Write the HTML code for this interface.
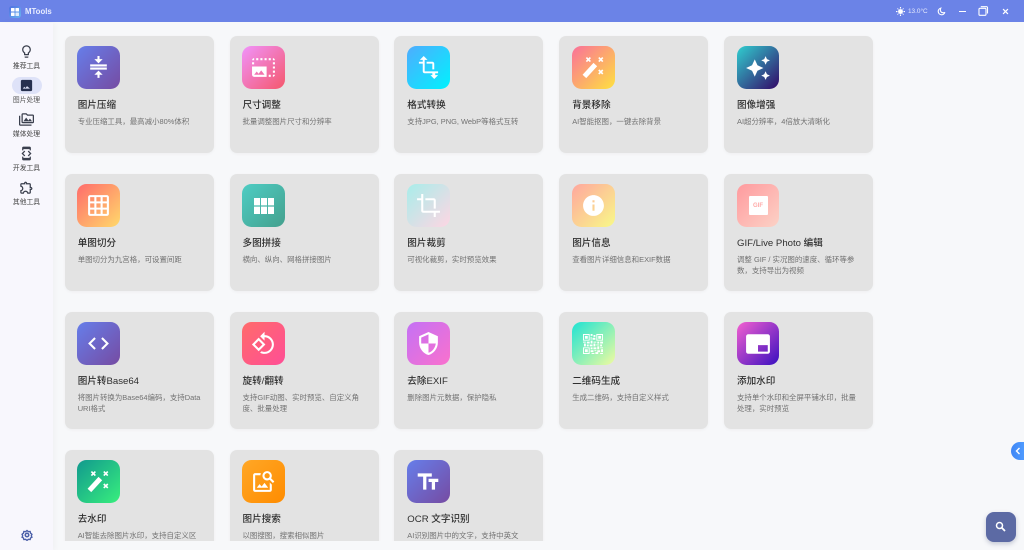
<!DOCTYPE html>
<html lang="zh-CN"><head><meta charset="utf-8"><title>MTools</title>
<style>
html,body{margin:0;padding:0;width:1024px;height:550px;overflow:hidden;background:#f7f8fa}
*{box-sizing:border-box}
body{font-family:"Liberation Sans","Noto Sans CJK SC",sans-serif;position:relative}
#root{position:absolute;inset:0;filter:blur(.3px)}
.top{position:absolute;left:0;top:0;width:1024px;height:22.3px;background:#6b83e7;color:#fff}
.side{position:absolute;left:0;top:22.5px;width:53px;height:528px;background:#f8f7fd;box-shadow:2px 0 6px rgba(0,0,0,.03)}
.pill{position:absolute;left:12px;top:54.5px;width:29.5px;height:17px;border-radius:9px;background:#dee2f8}
.sl{position:absolute;left:0;width:53px;text-align:center;font-size:6.8px;line-height:9px;color:#444;white-space:nowrap;margin-top:.5px}
.si{position:absolute;left:19px;width:15px;height:15px;fill:#3a3f4d}
.clip{position:absolute;left:60px;top:22.5px;width:964px;height:518.7px;overflow:hidden}
.c{position:absolute;width:149px;height:117px;background:#e3e3e3;border-radius:7px;box-shadow:0 1px 3px rgba(0,0,0,.04)}
.i{position:absolute;left:12.7px;top:10.6px;width:42.7px;height:42.7px;border-radius:9.5px;display:flex;align-items:center;justify-content:center}
.i svg{width:25px;height:25px;fill:#fff;display:block}
.t{position:absolute;left:13px;top:63px;font-size:9.6px;line-height:13px;color:#2f2f2f;white-space:nowrap;font-weight:500}
.d{position:absolute;left:13px;top:81.2px;font-size:7.45px;line-height:10.7px;color:#727272;white-space:nowrap}
</style></head><body><div id="root">
<div class="top">
 <div style="position:absolute;left:8.500px;top:5.500px;width:12px;height:12px;border-radius:3px;background:linear-gradient(135deg,#4f6fe0,#6ab4f0)"></div>
 <svg style="position:absolute;left:10.500px;top:7.500px" width="8" height="8" viewBox="0 0 9 9" fill="#fff"><rect width="4" height="4" rx=".5"/><rect x="5" width="4" height="4" rx=".5"/><rect y="5" width="4" height="4" rx=".5"/><rect x="5" y="5" width="4" height="4" rx=".5" opacity=".8"/></svg>
 <div style="position:absolute;left:25px;top:6px;font-size:7.800px;line-height:11px;font-weight:700;color:#e8ecff">MTools</div>
 <svg style="position:absolute;left:895.500px;top:6.500px" width="9" height="9" viewBox="0 0 24 24" fill="#fff"><circle cx="12" cy="12" r="6.500"/><path d="M10.500 0h3v4h-3zM10.500 20h3v4h-3zM0 10.500h4v3H0zM20 10.500h4v3h-4zM3 4.400L4.400 3l2.800 2.800-1.400 1.400zM16.800 18.200l1.400-1.400 2.800 2.800-1.400 1.400zM3 19.600l2.800-2.800 1.400 1.400L4.400 21zM16.800 5.800L19.600 3 21 4.400l-2.800 2.800z"/></svg>
 <div style="position:absolute;left:908px;top:6.500px;font-size:6.400px;line-height:10px;color:#e6eafc;white-space:nowrap">13.0°C</div>
 <svg style="position:absolute;left:937px;top:6.500px" width="9" height="9" viewBox="0 0 24 24" fill="none" stroke="#fff" stroke-width="3"><path d="M10 3a9 9 0 1 0 11 11c-1.500 2-9 2-11-2-1.500-3-1-7 0-9z"/></svg>
 <div style="position:absolute;left:959px;top:10.500px;width:7px;height:1.200px;background:#fff"></div>
 <svg style="position:absolute;left:978px;top:6px" width="10.500" height="10" viewBox="0 0 11 11" fill="none" stroke="#fff" stroke-width="1.200"><rect x=".8" y="2.500" width="7.700" height="7.700" rx="1"/><path d="M2.800 .8h6.400a1 1 0 0 1 1 1v6.400"/></svg>
 <svg style="position:absolute;left:1001.500px;top:8px" width="7" height="7" viewBox="0 0 8 8" stroke="#fff" stroke-width="1.400"><path d="M1.200 1.200l5.600 5.600M6.800 1.200L1.200 6.800"/></svg>
</div>

<div class="side">
 <div class="pill"></div>
 <svg class="si" style="top:21px" viewBox="0 0 24 24"><path d="M9 21c0 .55.45 1 1 1h4c.55 0 1-.45 1-1v-1H9v1zm3-19C8.140 2 5 5.140 5 9c0 2.380 1.190 4.470 3 5.740V17c0 .55.45 1 1 1h6c.55 0 1-.45 1-1v-2.260c1.810-1.270 3-3.360 3-5.740 0-3.860-3.140-7-7-7zm2.850 11.100l-.85.6V16h-4v-2.300l-.85-.6C7.800 12.160 7 10.630 7 9c0-2.760 2.240-5 5-5s5 2.240 5 5c0 1.630-.8 3.160-2.150 4.100z"/></svg>
 <div class="sl" style="top:39px">推荐工具</div>
 <svg class="si" style="top:55.500px;fill:#26304f" viewBox="0 0 24 24"><path d="M19 3H5c-1.100 0-2 .9-2 2v14c0 1.100.9 2 2 2h14c1.100 0 2-.9 2-2V5c0-1.100-.9-2-2-2zM6 17l2.500-3 1.800 2.200 2.500-3.200L17.500 17H6z"/></svg>
 <div class="sl" style="top:73px;color:#555">图片处理</div>
 <svg class="si" style="top:89px" viewBox="0 0 24 24"><path d="M2 6H0v5h.01L0 20c0 1.100.9 2 2 2h18v-2H2V6zm5 9h14l-3.500-4.500-2.500 3.010L11.500 9zM22 4h-8l-2-2H6c-1.100 0-1.990.9-1.990 2L4 16c0 1.100.9 2 2 2h16c1.100 0 2-.9 2-2V6c0-1.100-.9-2-2-2zm0 12H6V4h5.170l1.410 1.410.59.59H22v10z"/></svg>
 <div class="sl" style="top:107px">媒体处理</div>
 <svg class="si" style="top:123px" viewBox="0 0 24 24"><path d="M7 5h10v2h2V3c0-1.100-.9-1.990-2-1.990L7 1c-1.100 0-2 .9-2 2v4h2V5zm8.410 11.590L20 12l-4.590-4.590L14 8.830 17.170 12 14 15.170l1.410 1.420zM10 15.170L6.830 12 10 8.830 8.590 7.410 4 12l4.590 4.590L10 15.170zM17 19H7v-2H5v4c0 1.100.9 2 2 2h10c1.100 0 2-.9 2-2v-4h-2v2z"/></svg>
 <div class="sl" style="top:141px">开发工具</div>
 <svg class="si" style="top:157px" viewBox="0 0 24 24"><path d="M10.500 4.500c.28 0 .5.22.5.5v2h6v6h2c.28 0 .5.22.5.5s-.22.5-.5.5h-2v6h-2.120c-.68-1.750-2.390-3-4.380-3s-3.700 1.250-4.380 3H4v-2.120c1.750-.68 3-2.390 3-4.380 0-1.990-1.240-3.700-2.990-4.380L4 7h6V5c0-.28.22-.5.5-.5zm0-2C9.120 2.500 8 3.620 8 5H4c-1.100 0-1.990.9-1.990 2v3.800h.29c1.490 0 2.700 1.210 2.700 2.700s-1.210 2.700-2.700 2.700H2V20c0 1.100.9 2 2 2h3.800v-.3c0-1.490 1.210-2.700 2.700-2.700s2.700 1.210 2.700 2.700v.3H17c1.100 0 2-.9 2-2v-4c1.380 0 2.500-1.120 2.500-2.500S20.380 11 19 11V7c0-1.100-.9-2-2-2h-4c0-1.380-1.120-2.500-2.500-2.500z"/></svg>
 <div class="sl" style="top:175px">其他工具</div>
 <svg style="position:absolute;left:20.500px;top:506.500px" width="12" height="12" viewBox="0 0 24 24" fill="none" stroke="#4b5fa8" stroke-width="3"><path d="M12 2l3 2.500 4-.3 1 3.800 3 2.500-1.500 3.500 1.500 3-3 1.500-1 3.500-4-.3-3 2.300-3-2.300-4 .3-1-3.500-3-1.500 1.500-3L1 10.500 4 8l1-3.800 4 .3z" transform="translate(1.200 1.200) scale(.9)"/><circle cx="12" cy="12" r="3.500"/></svg>
</div>

<div class="clip">

<!-- row 1 -->
<div class="c" style="left:4.700px;top:13.200px"><div class="i" style="background:linear-gradient(135deg,#667eea,#764ba2)"><svg viewBox="0 0 24 24"><path d="M8 19h3v3h2v-3h3l-4-4-4 4zm8-15h-3V1h-2v3H8l4 4 4-4zM4 9v2h16V9H4zM4 12h16v2H4z"/></svg></div><div class="t">图片压缩</div><div class="d">专业压缩工具，最高减小80%体积</div></div>
<div class="c" style="left:169.500px;top:13.200px"><div class="i" style="background:linear-gradient(135deg,#f093fb,#f5576c)"><svg viewBox="0 0 24 24"><path d="M21 15h2v2h-2v-2zm0-4h2v2h-2v-2zm2 8h-2v2c1 0 2-1 2-2zM13 3h2v2h-2V3zm8 4h2v2h-2V7zm0-4v2h2c0-1-1-2-2-2zM1 7h2v2H1V7zm16-4h2v2h-2V3zm0 16h2v2h-2v-2zM3 3C2 3 1 4 1 5h2V3zm6 0h2v2H9V3zM5 3h2v2H5V3zm-4 8v8c0 1.100.9 2 2 2h12V11H1zm2 8l2.500-3.210 1.790 2.150 2.500-3.220L13 19H3z"/></svg></div><div class="t">尺寸调整</div><div class="d">批量调整图片尺寸和分辨率</div></div>
<div class="c" style="left:334.300px;top:13.200px"><div class="i" style="background:linear-gradient(135deg,#4facfe,#00f2fe)"><svg viewBox="0 0 24 24" style="width:23px;height:23px"><path d="M22 18v-2H8V4h3L7 0 3 4h3v2H2v2h4v8c0 1.100.9 2 2 2h8v2h-2l4 4 4-4h-3v-2h4zM10 8h6v6h2V8c0-1.100-.9-2-2-2h-6v2z"/></svg></div><div class="t">格式转换</div><div class="d">支持JPG, PNG, WebP等格式互转</div></div>
<div class="c" style="left:499.200px;top:13.200px"><div class="i" style="background:linear-gradient(135deg,#fa709a,#fee140)"><svg viewBox="0 0 43 43" style="width:43px;height:43px;fill:none;stroke:#fff"><path d="M12.500 30.500L23.500 18.500" stroke-width="5"/><path d="M14.500 11.500l4 4M18.500 11.500l-4 4M27 11.500l4 4M31 11.500l-4 4M27 24l4 4M31 24l-4 4" stroke-width="1.700"/></svg></div><div class="t">背景移除</div><div class="d">AI智能抠图，一键去除背景</div></div>
<div class="c" style="left:664px;top:13.200px"><div class="i" style="background:linear-gradient(135deg,#30cfd0,#330867)"><svg viewBox="0 0 24 24" style="width:26px;height:26px"><path d="M19 9l1.250-2.750L23 5l-2.750-1.250L19 1l-1.250 2.750L15 5l2.750 1.250L19 9zm-7.500.5L9 4 6.500 9.500 1 12l5.500 2.500L9 20l2.500-5.500L17 12l-5.500-2.500zM19 15l-1.250 2.750L15 19l2.750 1.250L19 23l1.250-2.750L23 19l-2.750-1.250L19 15z"/></svg></div><div class="t">图像增强</div><div class="d">AI超分辨率，4倍放大清晰化</div></div>

<!-- row 2 -->
<div class="c" style="left:4.700px;top:151.200px"><div class="i" style="background:linear-gradient(135deg,#ff6b6b,#ffd96b)"><svg viewBox="0 0 24 24"><path d="M20 2H4c-1.100 0-2 .9-2 2v16c0 1.100.9 2 2 2h16c1.100 0 2-.9 2-2V4c0-1.100-.9-2-2-2zM8 20H4v-4h4v4zm0-6H4v-4h4v4zm0-6H4V4h4v4zm6 12h-4v-4h4v4zm0-6h-4v-4h4v4zm0-6h-4V4h4v4zm6 12h-4v-4h4v4zm0-6h-4v-4h4v4zm0-6h-4V4h4v4z"/></svg></div><div class="t">单图切分</div><div class="d">单图切分为九宫格，可设置间距</div></div>
<div class="c" style="left:169.500px;top:151.200px"><div class="i" style="background:linear-gradient(135deg,#4ecdc4,#44a08d)"><svg viewBox="0 0 20 16" style="width:20px;height:16px"><path d="M0 0h6v7.400H0zM7 0h6v7.400H7zM14 0h6v7.400h-6zM0 8.600h6V16H0zM7 8.600h6V16H7zM14 8.600h6V16h-6z"/></svg></div><div class="t">多图拼接</div><div class="d">横向、纵向、网格拼接图片</div></div>
<div class="c" style="left:334.300px;top:151.200px"><div class="i" style="background:linear-gradient(135deg,#a8edea,#fed6e3)"><svg viewBox="0 0 24 24"><path d="M17 15h2V7c0-1.100-.9-2-2-2H9v2h8v8zM7 17V1H5v4H1v2h4v10c0 1.100.9 2 2 2h10v4h2v-4h4v-2H7z"/></svg></div><div class="t">图片裁剪</div><div class="d">可视化裁剪，实时预览效果</div></div>
<div class="c" style="left:499.200px;top:151.200px"><div class="i" style="background:linear-gradient(135deg,#ffa69e,#f8f988)"><svg viewBox="0 0 24 24"><path d="M12 2C6.480 2 2 6.480 2 12s4.480 10 10 10 10-4.480 10-10S17.520 2 12 2zm1 15h-2v-6h2v6zm0-8h-2V7h2v2z"/></svg></div><div class="t">图片信息</div><div class="d">查看图片详细信息和EXIF数据</div></div>
<div class="c" style="left:664px;top:151.200px"><div class="i" style="background:linear-gradient(135deg,#ff9a9e,#fcd2c6)"><div style="width:19px;height:19px;background:#fff;border-radius:1px;display:flex;align-items:center;justify-content:center;font-size:6px;font-weight:700;color:#ffaaa8">GIF</div></div><div class="t">GIF/Live Photo 编辑</div><div class="d">调整 GIF / 实况图的速度、循环等参<br>数，支持导出为视频</div></div>

<!-- row 3 -->
<div class="c" style="left:4.700px;top:289.200px"><div class="i" style="background:linear-gradient(135deg,#667eea,#764ba2)"><svg viewBox="0 0 24 24"><path d="M9.400 16.600L4.800 12l4.600-4.600L8 6l-6 6 6 6 1.400-1.400zm5.200 0l4.600-4.600-4.600-4.600L16 6l6 6-6 6-1.400-1.400z"/></svg></div><div class="t">图片转Base64</div><div class="d">将图片转换为Base64编码，支持Data<br>URI格式</div></div>
<div class="c" style="left:169.500px;top:289.200px"><div class="i" style="background:linear-gradient(135deg,#ff6b6b,#ff4e96)"><svg viewBox="0 0 24 24"><path d="M7.340 6.410L.86 12.900l6.490 6.480 6.490-6.480-6.500-6.490zM3.690 12.900l3.660-3.660L11 12.900l-3.660 3.660-3.650-3.660zm15.670-6.260C17.610 4.880 15.300 4 13 4V.76L8.760 5 13 9.240V6c1.790 0 3.580.68 4.950 2.050 2.730 2.730 2.730 7.170 0 9.900C16.580 19.320 14.790 20 13 20c-.97 0-1.940-.21-2.840-.61l-1.490 1.490C10.020 21.620 11.510 22 13 22c2.300 0 4.610-.88 6.360-2.640 3.520-3.510 3.520-9.210 0-12.720z"/></svg></div><div class="t">旋转/翻转</div><div class="d">支持GIF动图、实时预览、自定义角<br>度、批量处理</div></div>
<div class="c" style="left:334.300px;top:289.200px"><div class="i" style="background:linear-gradient(135deg,#c471f5,#fa71cd)"><svg viewBox="0 0 24 24"><path d="M12 1L3 5v6c0 5.550 3.840 10.740 9 12 5.160-1.260 9-6.450 9-12V5l-9-4zm0 10.990h7c-.53 4.120-3.280 7.790-7 8.940V12H5V6.300l7-3.110v8.800z"/></svg></div><div class="t">去除EXIF</div><div class="d">删除图片元数据，保护隐私</div></div>
<div class="c" style="left:499.200px;top:289.200px"><div class="i" style="background:linear-gradient(135deg,#1fe3d3,#f0fb9f)"><svg viewBox="0 0 21 21" style="width:20px;height:20px"><path d="M0 0h7v7H0zM1 1v5h5V1zM2 2h3v3H2zM14 0h7v7h-7zM15 1v5h5V1zM16 2h3v3h-3zM0 14h7v7H0zM1 15v5h5v-5zM2 16h3v3H2zM8 0h2v2H8zM11 1h2v2h-2zM8 3h1v3H8zM10 4h3v2h-3zM0 8h3v1H0zM4 8h3v2H4zM8 7h2v3H8zM11 8h3v1h-3zM15 8h2v2h-2zM18 8h3v2h-3zM1 10h2v3H1zM4 11h2v2H4zM7 11h3v2H7zM11 10h2v3h-2zM14 11h3v1h-3zM18 11h2v2h-2zM8 14h2v2H8zM11 14h3v2h-3zM15 13h2v3h-2zM18 14h3v1h-3zM8 17h3v2H8zM12 17h2v1h-2zM15 17h3v2h-3zM19 16h2v3h-2zM9 20h3v1H9zM13 19h3v2h-3zM18 20h3v1h-3z"/></svg></div><div class="t">二维码生成</div><div class="d">生成二维码，支持自定义样式</div></div>
<div class="c" style="left:664px;top:289.200px"><div class="i" style="background:linear-gradient(135deg,#f35fd0,#3a10c0)"><svg viewBox="0 0 24 24" style="width:26px;height:26px"><path d="M21 3H3c-1.100 0-2 .9-2 2v14c0 1.100.9 2 2 2h18c1.100 0 2-.9 2-2V5c0-1.100-.9-2-2-2zm0 16h-9v-6h9v6z"/></svg></div><div class="t">添加水印</div><div class="d">支持单个水印和全屏平铺水印，批量<br>处理，实时预览</div></div>

<!-- row 4 -->
<div class="c" style="left:4.700px;top:427.200px"><div class="i" style="background:linear-gradient(135deg,#11998e,#38ef7d)"><svg viewBox="0 0 43 43" style="width:43px;height:43px;fill:none;stroke:#fff"><path d="M12.500 30.500L23.500 18.500" stroke-width="5"/><path d="M14.500 11.500l4 4M18.500 11.500l-4 4M27 11.500l4 4M31 11.500l-4 4M27 24l4 4M31 24l-4 4" stroke-width="1.700"/></svg></div><div class="t">去水印</div><div class="d">AI智能去除图片水印，支持自定义区</div></div>
<div class="c" style="left:169.500px;top:427.200px"><div class="i" style="background:linear-gradient(135deg,#ffa726,#ff8c00)"><svg viewBox="0 0 24 24"><path d="M18 13v7H4V6h5.020c.05-.71.22-1.380.48-2H4c-1.100 0-2 .9-2 2v14c0 1.100.9 2 2 2h14c1.100 0 2-.9 2-2v-5l-2-2zm-1.500 5h-11l2.750-3.530 1.960 2.360 2.750-3.540zm2.800-9.110c.44-.7.7-1.510.7-2.390C20 4.010 17.990 2 15.500 2S11 4.010 11 6.500s2.010 4.500 4.490 4.500c.88 0 1.700-.26 2.390-.7L21 13.420 22.420 12 19.300 8.890zM15.500 9C14.120 9 13 7.880 13 6.500S14.120 4 15.500 4 18 5.120 18 6.500 16.880 9 15.500 9z"/></svg></div><div class="t">图片搜索</div><div class="d">以图搜图，搜索相似图片</div></div>
<div class="c" style="left:334.300px;top:427.200px"><div class="i" style="background:linear-gradient(135deg,#667eea,#764ba2)"><svg viewBox="0 0 24 24" style="width:26px;height:26px"><path d="M2.500 4v3h5v12h3V7h5V4h-13zm19 5h-9v3h3v7h3v-7h3V9z"/></svg></div><div class="t">OCR 文字识别</div><div class="d">AI识别图片中的文字，支持中英文</div></div>
</div>

<div style="position:absolute;left:1011px;top:442px;width:13px;height:18px;border-radius:9px 0 0 9px;background:linear-gradient(90deg,#3f86f5,#4f9bff)"></div>
<svg style="position:absolute;left:1015px;top:447px" width="6" height="8" viewBox="0 0 6 8" fill="none" stroke="#fff" stroke-width="1.400"><path d="M4.500 1L1.500 4l3 3"/></svg>
<div style="position:absolute;left:985.500px;top:511.500px;width:30px;height:30px;border-radius:8px;background:#5c6aa4;box-shadow:0 2px 5px rgba(40,50,100,.25)"></div>
<svg style="position:absolute;left:995px;top:521px" width="11" height="11" viewBox="0 0 11 11" fill="none" stroke="#fff" stroke-width="1.500"><circle cx="4.500" cy="4.500" r="3"/><path d="M6.800 6.800L10 10" stroke-width="1.800"/></svg>
</div></body></html>
